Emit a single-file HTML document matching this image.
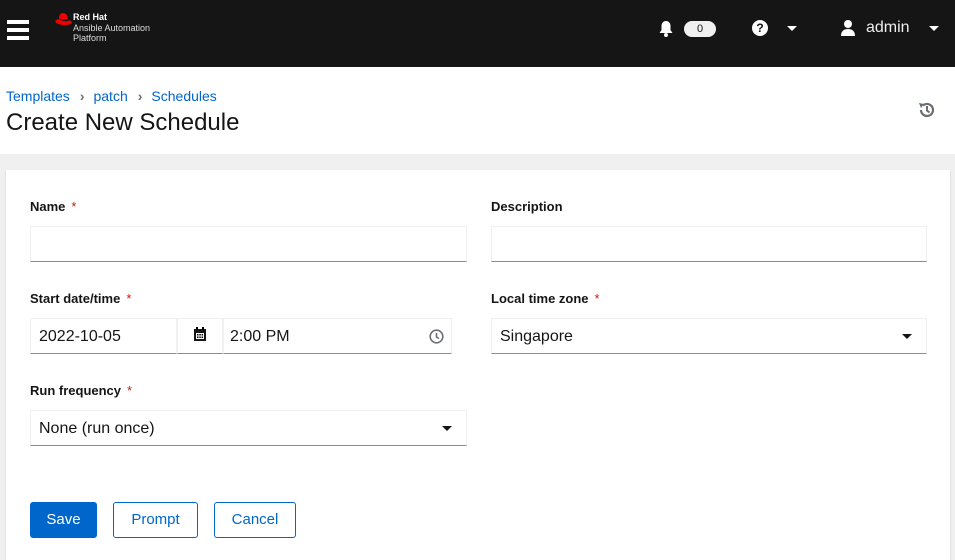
<!DOCTYPE html>
<html><head><style>
*{box-sizing:border-box;margin:0;padding:0}
body{width:955px;height:549px;overflow:hidden;font-family:"Liberation Sans",sans-serif;background:#f0f0f0;position:relative;color:#151515}
.hdr{position:absolute;left:0;top:0;width:955px;height:67px;background:#151515;color:#fff}
.top{position:absolute;left:0;top:67px;width:955px;height:87px;background:#fff}
.card{position:absolute;left:6px;top:170px;width:944px;height:390px;background:#fff;box-shadow:0 1px 2px rgba(0,0,0,.15)}
.a{position:absolute}
.lbl{position:absolute;font-size:13px;font-weight:bold}
.lbl span{color:#c9190b;margin-left:6px;font-weight:normal}
.inp{position:absolute;height:36px;border:1px solid #f0f0f0;border-bottom:1px solid #8a8d90;font-size:16px;padding:9px 8px 0;background:#fff}
.caret{position:absolute;width:0;height:0;border-left:5px solid transparent;border-right:5px solid transparent;border-top:5px solid #151515}
.btn{position:absolute;top:332px;height:36px;border:1px solid #06c;border-radius:3px;font-size:15px;color:#06c;text-align:center;line-height:34px}
.chev{color:#6a6e73;margin:0 9px 0 10px;font-weight:bold}
</style></head><body>
<div class="hdr">
 <div class="a" style="left:7px;top:20px;width:22px;height:4px;background:#fff"></div>
 <div class="a" style="left:7px;top:28px;width:22px;height:4px;background:#fff"></div>
 <div class="a" style="left:7px;top:36px;width:22px;height:4px;background:#fff"></div>
 <svg class="a" style="left:54px;top:12px" width="20" height="14" viewBox="0 0 20 14"><path d="M1 9 Q3 13 10 13 Q18 13 18 10 L15 8 Q14 10 10 9 Q5 8 4 7Z" fill="#e00"/><path d="M5 7 Q5 1 9 1 Q13 1 14 6 Q13 8 9 7.5 Q6 7.5 5 7Z" fill="#e00"/></svg>
 <div class="a" style="left:73px;top:12px;font-size:9px;font-weight:bold;line-height:10px">Red Hat</div>
 <div class="a" style="left:73px;top:23px;font-size:9px;line-height:10px;color:#ddd">Ansible Automation<br>Platform</div>
 <svg class="a" style="left:658px;top:20px" width="16" height="18" viewBox="0 0 16 18"><path d="M8 1C5 1 3.5 3.5 3.5 6V10L1.5 13H14.5L12.5 10V6C12.5 3.5 11 1 8 1Z" fill="#fff"/><circle cx="8" cy="15" r="2" fill="#fff"/></svg>
 <div class="a" style="left:684px;top:21px;width:32px;height:16px;border-radius:8px;background:#f0f0f0;color:#151515;font-size:11px;text-align:center;line-height:16px">0</div>
 <div class="a" style="left:752px;top:20px;width:16px;height:16px;border-radius:50%;background:#fff;color:#151515;font-size:12px;font-weight:bold;text-align:center;line-height:16px">?</div>
 <div class="caret" style="left:787px;top:26px;border-top-color:#fff"></div>
 <svg class="a" style="left:840px;top:19px" width="16" height="18" viewBox="0 0 16 18"><circle cx="8" cy="5" r="4" fill="#fff"/><path d="M1 17C1 12 4 10 8 10S15 12 15 17Z" fill="#fff"/></svg>
 <div class="a" style="left:866px;top:19px;font-size:16px;color:#eee">admin</div>
 <div class="caret" style="left:929px;top:26px;border-top-color:#fff"></div>
</div>
<div class="top">
 <div class="a" style="left:6px;top:21px;font-size:14px;color:#06c">Templates<span class="chev">›</span>patch<span class="chev">›</span>Schedules</div>
 <div class="a" style="left:6px;top:42px;font-size:24px">Create New Schedule</div>
 <svg class="a" style="left:918px;top:34px" width="18" height="18" viewBox="0 0 18 18"><path d="M3 9A6 6 0 1 0 5 4.5" fill="none" stroke="#6a6e73" stroke-width="2.2"/><path d="M1 2L6 3L3 7Z" fill="#6a6e73"/><path d="M9 5V9.5L11.5 11.5" fill="none" stroke="#6a6e73" stroke-width="2"/></svg>
</div>
<div class="card">
 <div class="lbl" style="left:24px;top:29px">Name<span>*</span></div>
 <div class="inp" style="left:24px;top:56px;width:437px"></div>
 <div class="lbl" style="left:485px;top:29px">Description</div>
 <div class="inp" style="left:485px;top:56px;width:436px"></div>
 <div class="lbl" style="left:24px;top:121px">Start date/time<span>*</span></div>
 <div class="inp" style="left:24px;top:148px;width:147px">2022-10-05</div>
 <div class="inp" style="left:171px;top:148px;width:46px;padding-top:8px"><svg width="14" height="15" viewBox="0 0 14 15" style="margin-left:7px"><rect x="1" y="2" width="12" height="12" fill="#151515"/><rect x="3" y="6" width="8" height="6" fill="#fff"/><rect x="4" y="7" width="1.5" height="1.5"/><rect x="6.3" y="7" width="1.5" height="1.5"/><rect x="8.6" y="7" width="1.5" height="1.5"/><rect x="4" y="9.5" width="1.5" height="1.5"/><rect x="6.3" y="9.5" width="1.5" height="1.5"/><rect x="8.6" y="9.5" width="1.5" height="1.5"/><rect x="3" y="0" width="2" height="3"/><rect x="9" y="0" width="2" height="3"/></svg></div>
 <div class="inp" style="left:217px;top:148px;width:229px;padding-left:6px">2:00 PM<svg style="position:absolute;right:7px;top:10px" width="15" height="15" viewBox="0 0 15 15"><circle cx="7.5" cy="7.5" r="6.3" fill="none" stroke="#6a6e73" stroke-width="1.6"/><path d="M7.5 4V8L10 9.5" fill="none" stroke="#6a6e73" stroke-width="1.6"/></svg></div>
 <div class="lbl" style="left:485px;top:121px">Local time zone<span>*</span></div>
 <div class="inp" style="left:485px;top:148px;width:436px">Singapore<div class="caret" style="right:14px;top:15px"></div></div>
 <div class="lbl" style="left:24px;top:213px">Run frequency<span>*</span></div>
 <div class="inp" style="left:24px;top:240px;width:437px">None (run once)<div class="caret" style="right:14px;top:15px"></div></div>
 <div class="btn" style="left:24px;width:67px;background:#06c;color:#fff">Save</div>
 <div class="btn" style="left:107px;width:85px">Prompt</div>
 <div class="btn" style="left:208px;width:82px">Cancel</div>
</div>
</body></html>
